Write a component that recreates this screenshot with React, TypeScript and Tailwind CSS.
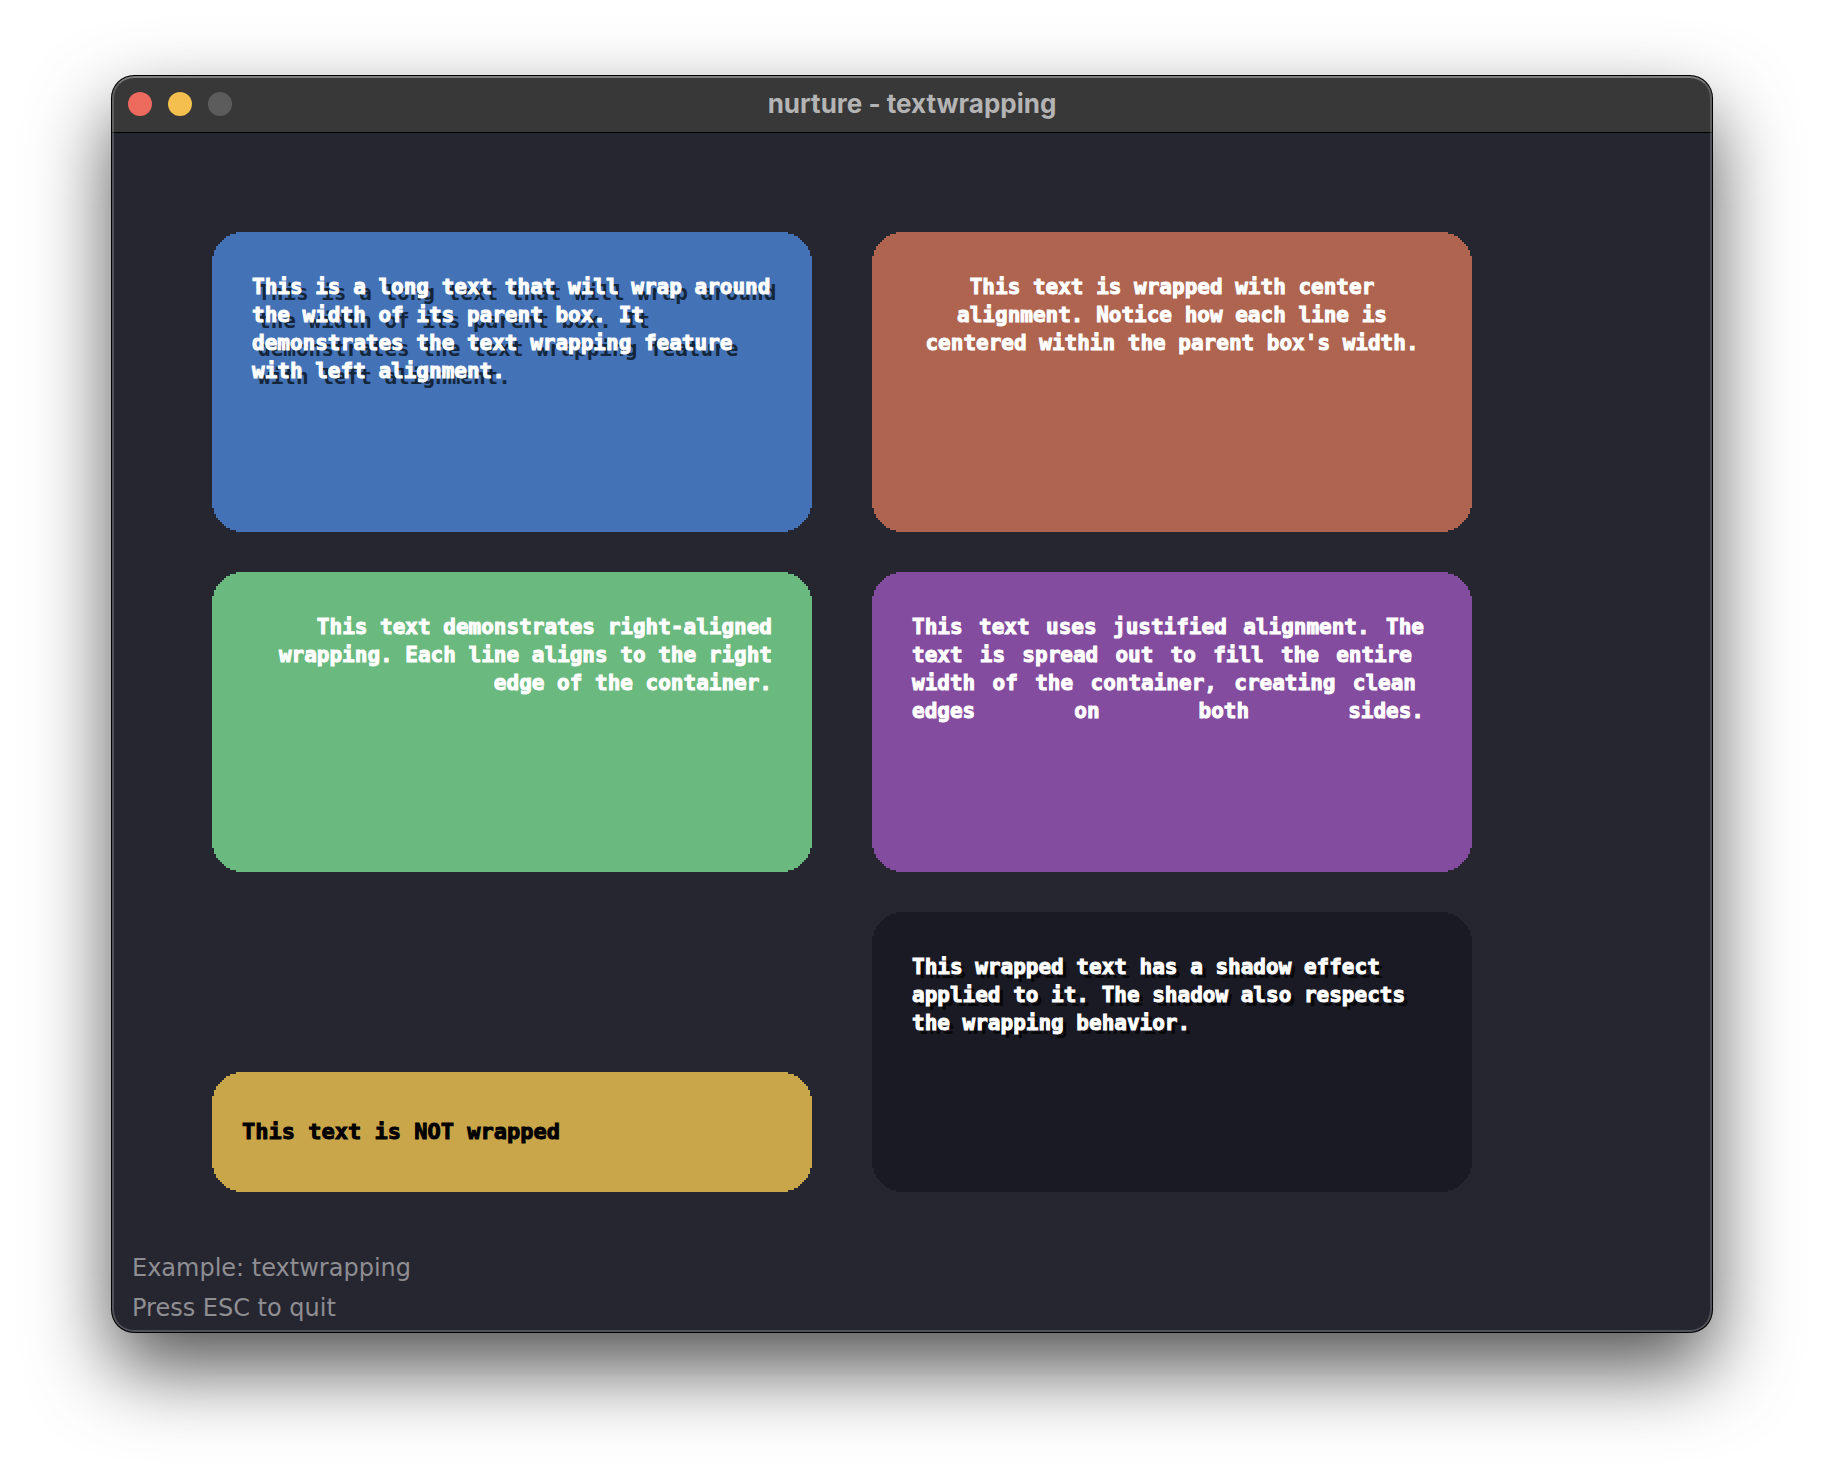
import type { CSSProperties, ReactNode } from "react";

// Inset of each 2px row of a rounded corner, counted in 2px cells from the edge.
const CORNER_ROWS = [12, 9, 7, 6, 5, 4, 3, 2, 2, 1, 1, 1];
const CELL = 2;

// Builds a stair-stepped rounded rectangle that adapts to the element's size.
function steppedCorners(): string {
  const corner: Array<[number, number]> = [];
  CORNER_ROWS.forEach((inset, row) => {
    corner.push([inset * CELL, row * CELL]);
    corner.push([inset * CELL, (row + 1) * CELL]);
  });
  corner.push([0, CORNER_ROWS.length * CELL]);

  const far = (n: number) => `calc(100% - ${n}px)`;
  const near = (n: number) => `${n}px`;
  const reversed = [...corner].reverse();

  const points = [
    ...corner.map(([x, y]) => `${near(x)} ${near(y)}`),
    ...reversed.map(([x, y]) => `${near(x)} ${far(y)}`),
    ...corner.map(([x, y]) => `${far(x)} ${far(y)}`),
    ...reversed.map(([x, y]) => `${far(x)} ${near(y)}`),
  ];
  return `polygon(${points.join(", ")})`;
}

const pixelShape: CSSProperties = { clipPath: steppedCorners() };

function Box({ className, children }: { className: string; children: ReactNode }) {
  return (
    <section
      style={pixelShape}
      className={`font-['DejaVu_Sans_Mono',monospace] font-bold leading-7 [-webkit-text-stroke:1px] ${className}`}
    >
      {children}
    </section>
  );
}

function Lines({ lines, className = "" }: { lines: string[]; className?: string }) {
  return (
    <p className={`text-[21px] leading-7 text-white ${className}`}>
      {lines.map((line) => (
        <span key={line} className="block whitespace-nowrap">
          {line}{" "}
        </span>
      ))}
    </p>
  );
}

function TitleBar() {
  return (
    <header className="grid h-14 grid-cols-[1fr_auto_1fr] items-center bg-[#383838] px-4">
      <div className="flex gap-4">
        <button type="button" aria-label="Close" className="size-6 rounded-full bg-[#ed6a5e]" />
        <button type="button" aria-label="Minimize" className="size-6 rounded-full bg-[#f4bf4f]" />
        <button type="button" aria-label="Zoom" disabled className="size-6 rounded-full bg-[#5c5c5c]" />
      </div>
      <h1 className="font-[Inter,sans-serif] text-[26px] font-bold leading-8 text-[#b4b4b4]">
        nurture - textwrapping
      </h1>
    </header>
  );
}

export default function App() {
  return (
    <main className="min-h-screen bg-white px-28 pt-[76px] pb-[148px]">
      <div className="relative overflow-hidden rounded-[22px] bg-[#262630] shadow-[0_0_0_1px_#000000,0_36px_80px_rgba(0,0,0,0.68)] after:pointer-events-none after:absolute after:inset-0 after:rounded-[22px] after:border-2 after:border-white/20 after:border-t-white/35 after:content-['']">
        <TitleBar />
        <div className="border-t border-black px-5 pb-1">
          <div className="grid grid-cols-2 gap-x-[60px] gap-y-10 pt-[99px] pr-[220px] pl-20">
            <Box className="min-h-[300px] bg-[#4472b6] px-10 py-[41px]">
              <Lines
                className="[text-shadow:6px_6px_0_#14263a]"
                lines={[
                  "This is a long text that will wrap around",
                  "the width of its parent box. It",
                  "demonstrates the text wrapping feature",
                  "with left alignment.",
                ]}
              />
            </Box>
            <Box className="min-h-[300px] bg-[#ae644f] px-10 py-[41px]">
              <Lines
                className="text-center"
                lines={[
                  "This text is wrapped with center",
                  "alignment. Notice how each line is",
                  "centered within the parent box's width.",
                ]}
              />
            </Box>
            <Box className="min-h-[300px] bg-[#6ab97e] px-10 py-[41px]">
              <Lines
                className="text-right"
                lines={[
                  "This text demonstrates right-aligned",
                  "wrapping. Each line aligns to the right",
                  "edge of the container.",
                ]}
              />
            </Box>
            <Box className="min-h-[300px] bg-[#844c9e] px-10 py-[41px]">
              <p className="text-[21px] leading-7 text-white [text-align-last:justify]">
                <span className="block w-[512px]">This text uses justified alignment. The </span>
                <span className="block w-[500px]">text is spread out to fill the entire </span>
                <span className="block w-[504px]">width of the container, creating clean </span>
                <span className="block w-[512px]">edges on both sides.</span>
              </p>
            </Box>
            <Box className="flex min-h-[120px] items-center self-end bg-[#caa64b] px-[30px]">
              <p className="whitespace-nowrap text-[22px] leading-7 text-black">This text is NOT wrapped</p>
            </Box>
            <Box className="min-h-[280px] bg-[#1a1a24] px-10 py-[41px]">
              <Lines
                className="[text-shadow:4px_4px_0_#08080b]"
                lines={[
                  "This wrapped text has a shadow effect",
                  "applied to it. The shadow also respects",
                  "the wrapping behavior.",
                ]}
              />
            </Box>
          </div>
          <footer className="mt-14 font-['DejaVu_Sans',sans-serif] text-2xl leading-10 text-[#8e8e93]">
            <p className="leading-10">Example: textwrapping</p>
            <p className="leading-10">Press ESC to quit</p>
          </footer>
        </div>
      </div>
    </main>
  );
}
